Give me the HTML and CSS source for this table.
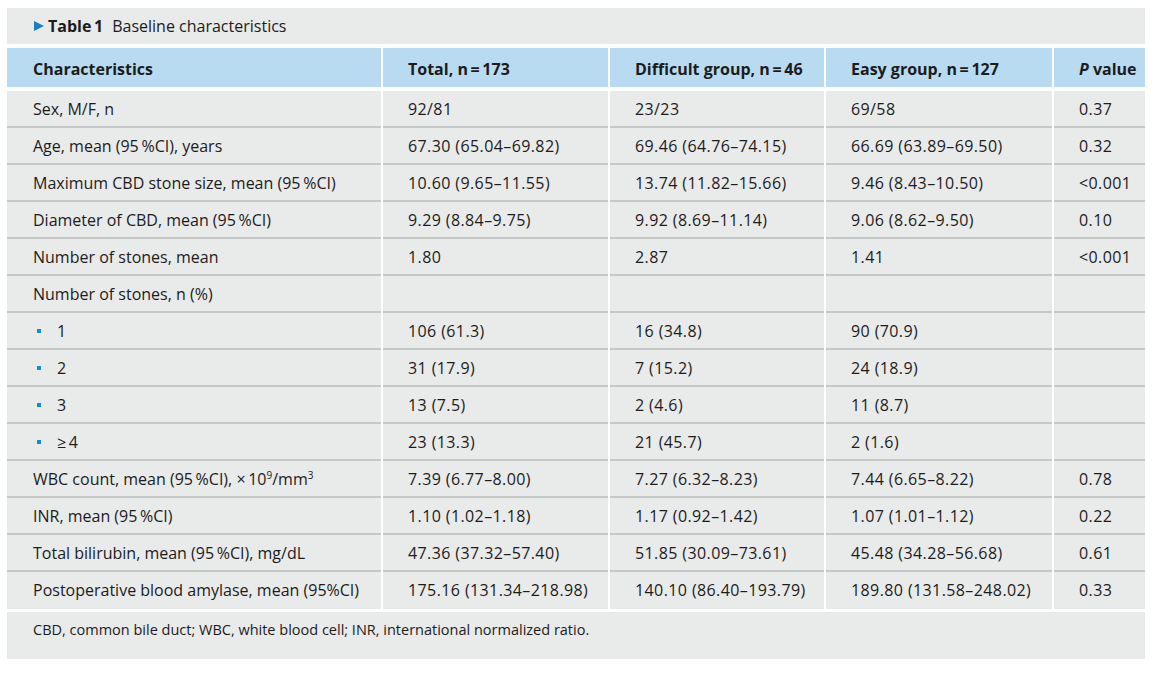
FILE: index.html
```html
<!DOCTYPE html>
<html lang="en">
<head>
<meta charset="utf-8">
<title>Table 1 Baseline characteristics</title>
<link rel="stylesheet" href="styles.css">
</head>
<body>
<div class="panel">
  <div class="caption"><span class="tri"></span><b class="label">Table&#8201;1</b><span class="ctitle">Baseline characteristics</span></div>
  <div class="thead">
    <div class="th">Characteristics</div>
    <div class="th num">Total, n&#8201;=&#8201;173</div>
    <div class="th num">Difficult group, n&#8201;=&#8201;46</div>
    <div class="th num">Easy group, n&#8201;=&#8201;127</div>
    <div class="th num"><span><i>P</i> value</span></div>
  </div>
  <div class="tbody">
    <div class="td">Sex, M/F, n</div><div class="td num">92/81</div><div class="td num">23/23</div><div class="td num">69/58</div><div class="td num">0.37</div>
    <div class="td">Age, mean (95&#8201;%CI), years</div><div class="td num">67.30 (65.04–69.82)</div><div class="td num">69.46 (64.76–74.15)</div><div class="td num">66.69 (63.89–69.50)</div><div class="td num">0.32</div>
    <div class="td">Maximum CBD stone size, mean (95&#8201;%CI)</div><div class="td num">10.60 (9.65–11.55)</div><div class="td num">13.74 (11.82–15.66)</div><div class="td num">9.46 (8.43–10.50)</div><div class="td num">&lt;0.001</div>
    <div class="td">Diameter of CBD, mean (95&#8201;%CI)</div><div class="td num">9.29 (8.84–9.75)</div><div class="td num">9.92 (8.69–11.14)</div><div class="td num">9.06 (8.62–9.50)</div><div class="td num">0.10</div>
    <div class="td">Number of stones, mean</div><div class="td num">1.80</div><div class="td num">2.87</div><div class="td num">1.41</div><div class="td num">&lt;0.001</div>
    <div class="td">Number of stones, n (%)</div><div class="td"></div><div class="td"></div><div class="td"></div><div class="td"></div>
    <div class="td bul"><span class="sq"></span>1</div><div class="td num">106 (61.3)</div><div class="td num">16 (34.8)</div><div class="td num">90 (70.9)</div><div class="td"></div>
    <div class="td bul"><span class="sq"></span>2</div><div class="td num">31 (17.9)</div><div class="td num">7 (15.2)</div><div class="td num">24 (18.9)</div><div class="td"></div>
    <div class="td bul"><span class="sq"></span>3</div><div class="td num">13 (7.5)</div><div class="td num">2 (4.6)</div><div class="td num">11 (8.7)</div><div class="td"></div>
    <div class="td bul"><span class="sq"></span>≥&#8201;4</div><div class="td num">23 (13.3)</div><div class="td num">21 (45.7)</div><div class="td num">2 (1.6)</div><div class="td"></div>
    <div class="td"><span>WBC count, mean (95&#8201;%CI), ×&#8201;10<sup>9</sup>/mm<sup>3</sup></span></div><div class="td num">7.39 (6.77–8.00)</div><div class="td num">7.27 (6.32–8.23)</div><div class="td num">7.44 (6.65–8.22)</div><div class="td num">0.78</div>
    <div class="td">INR, mean (95&#8201;%CI)</div><div class="td num">1.10 (1.02–1.18)</div><div class="td num">1.17 (0.92–1.42)</div><div class="td num">1.07 (1.01–1.12)</div><div class="td num">0.22</div>
    <div class="td">Total bilirubin, mean (95&#8201;%CI), mg/dL</div><div class="td num">47.36 (37.32–57.40)</div><div class="td num">51.85 (30.09–73.61)</div><div class="td num">45.48 (34.28–56.68)</div><div class="td num">0.61</div>
    <div class="td last">Postoperative blood amylase, mean (95%CI)</div><div class="td num last">175.16 (131.34–218.98)</div><div class="td num last">140.10 (86.40–193.79)</div><div class="td num last">189.80 (131.58–248.02)</div><div class="td num last">0.33</div>
  </div>
  <div class="foot">CBD, common bile duct; WBC, white blood cell; INR, international normalized ratio.</div>
</div>
</body>
</html>
```

FILE: styles.css
```css
html, body {
  margin: 0;
  padding: 0;
  background: #ffffff;
}
body {
  font-family: "Open Sans", "Noto Sans", sans-serif;
  color: #1c1c1c;
  font-size: 16px;
}
.panel {
  width: 1138px;
  margin: 8px 0 0 7px;
}
.caption {
  height: 36px;
  background: #e9eaea;
  display: flex;
  align-items: center;
  padding-left: 27px;
  font-size: 16px;
}
.tri {
  width: 0;
  height: 0;
  border-left: 10px solid #1a7fc8;
  border-top: 5px solid transparent;
  border-bottom: 5px solid transparent;
  margin-right: 4px;
}
.label {
  font-weight: 700;
  margin-right: 9px;
}
.thead, .tbody {
  display: grid;
  grid-template-columns: 374px 225px 214px 226px 91px;
  column-gap: 2px;
}
.thead {
  margin-top: 4px;
}
.th {
  background: #b8dbf2;
  height: 39px;
  box-sizing: border-box;
  padding-top: 2px;
  display: flex;
  align-items: center;
  padding-left: 25px;
  font-weight: 700;
  white-space: nowrap;
}
.th:first-child { padding-left: 26px; }
.tbody {
  margin-top: 4px;
}
.td {
  background: #e9eaea;
  height: 37px;
  box-sizing: border-box;
  padding-top: 1px;
  border-bottom: 2px solid #c6c7c7;
  display: flex;
  align-items: center;
  padding-left: 25px;
  white-space: nowrap;
}
.td.num { letter-spacing: 0.4px; }
.td:nth-child(5n+1) { padding-left: 26px; }
.td.last { border-bottom-color: #e9eaea; }
.td.bul { padding-left: 30px; }
.sq {
  width: 4px;
  height: 4px;
  background: #1a8ad4;
  margin-right: 16px;
}
sup {
  font-size: 10px;
  line-height: 0;
  vertical-align: baseline;
  position: relative;
  top: -6px;
}
.foot {
  margin-top: 3px;
  height: 47px;
  background: #e9eaea;
  padding: 8px 0 0 26px;
  box-sizing: border-box;
  font-size: 14.5px;
}
```
